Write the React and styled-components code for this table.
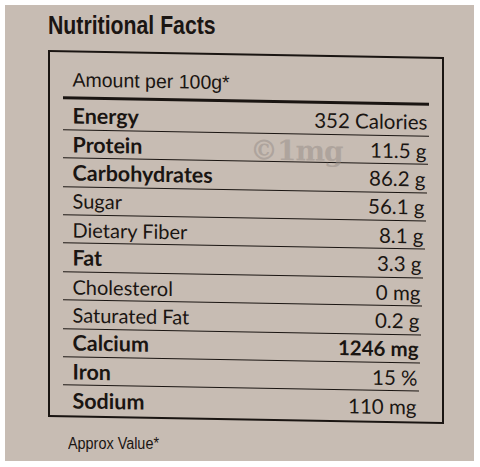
import React from 'react'
import styled, { createGlobalStyle } from 'styled-components'

const GlobalStyle = createGlobalStyle`
    body {
        margin: 0;
        background: #fff;
    }
`

const Photo = styled.div`
    width: 480px;
    height: 467px;
    box-sizing: border-box;
    padding: 5px 6px 6px 5px;
    background: #fff;
`

const Label = styled.div`
    height: 100%;
    box-sizing: border-box;
    padding-top: 5px;
    background: #c7bcb3;
    color: #1a1512;
    overflow: hidden;
`

const Title = styled.h1`
    margin: 0 0 0 43px;
    font-family: "Liberation Sans", Arial, sans-serif;
    font-weight: 700;
    font-size: 25px;
    line-height: 30px;
    transform: scaleX(0.85);
    transform-origin: left center;
    white-space: nowrap;
`

const Panel = styled.div`
    position: relative;
    margin: 10px 0 0 43px;
    width: 396px;
    box-sizing: border-box;
    border: 2.5px solid #1a1512;
    padding-bottom: 1px;
    transform: skewY(1deg);
    transform-origin: left top;
`

const Header = styled.div`
    margin: 0 13.5px 0 12.5px;
    padding: 15.5px 0 6px 10px;
    border-bottom: 3px solid #1a1512;
    font-family: "Liberation Sans", Arial, sans-serif;
    font-size: 19.5px;
    line-height: 22px;
`

const Rows = styled.div`
    margin: 3px 13.5px 0 12.5px;
    display: flex;
    flex-direction: column;
`

const Row = styled.div`
    display: flex;
    justify-content: space-between;
    align-items: center;
    height: 28.4px;
    box-sizing: border-box;
    margin-right: ${p => p.$inset}px;
    padding: 0 1px 0 10px;
    border-bottom: ${p => (p.$last ? 'none' : '1.5px solid #1a1512')};
    font-family: Lato, "Open Sans", sans-serif;
    line-height: 28px;
    white-space: nowrap;
`

const Name = styled.span`
    font-weight: ${p => (p.$bold ? 700 : 400)};
    font-size: ${p => (p.$bold ? '21.5px' : '20px')};
`

const Value = styled.span`
    font-weight: ${p => (p.$bold ? 700 : 400)};
    font-size: 20.5px;
`

const Watermark = styled.div`
    position: absolute;
    left: 200px;
    top: 78px;
    font-family: "DejaVu Serif", serif;
    font-weight: 700;
    font-size: 28px;
    letter-spacing: -1px;
    color: rgba(150, 141, 135, 0.5);
    pointer-events: none;
`

const Note = styled.div`
    margin: 18px 0 0 63px;
    font-family: "Liberation Sans", Arial, sans-serif;
    font-size: 16px;
    line-height: 18px;
    transform: scaleX(0.9);
    transform-origin: left center;
    white-space: nowrap;
`

const nutrients = [
    { name: 'Energy', value: '352 Calories', bold: true },
    { name: 'Protein', value: '11.5 g', bold: true },
    { name: 'Carbohydrates', value: '86.2 g', bold: true },
    { name: 'Sugar', value: '56.1 g' },
    { name: 'Dietary Fiber', value: '8.1 g' },
    { name: 'Fat', value: '3.3 g', bold: true },
    { name: 'Cholesterol', value: '0 mg' },
    { name: 'Saturated Fat', value: '0.2 g' },
    { name: 'Calcium', value: '1246 mg', bold: true, boldValue: true },
    { name: 'Iron', value: '15 %', bold: true },
    { name: 'Sodium', value: '110 mg', bold: true },
]

export default function App() {
    return (
        <Photo>
            <GlobalStyle />
            <Label>
                <Title>Nutritional Facts</Title>
                <Panel>
                    <Header>Amount per 100g*</Header>
                    <Rows>
                        {nutrients.map((n, i) => (
                            <Row
                                key={n.name}
                                $inset={Math.round(i * 1.1)}
                                $last={i === nutrients.length - 1}
                            >
                                <Name $bold={n.bold}>{n.name}</Name>
                                <Value $bold={n.boldValue}>{n.value}</Value>
                            </Row>
                        ))}
                    </Rows>
                    <Watermark>©1mg</Watermark>
                </Panel>
                <Note>Approx Value*</Note>
            </Label>
        </Photo>
    )
}
